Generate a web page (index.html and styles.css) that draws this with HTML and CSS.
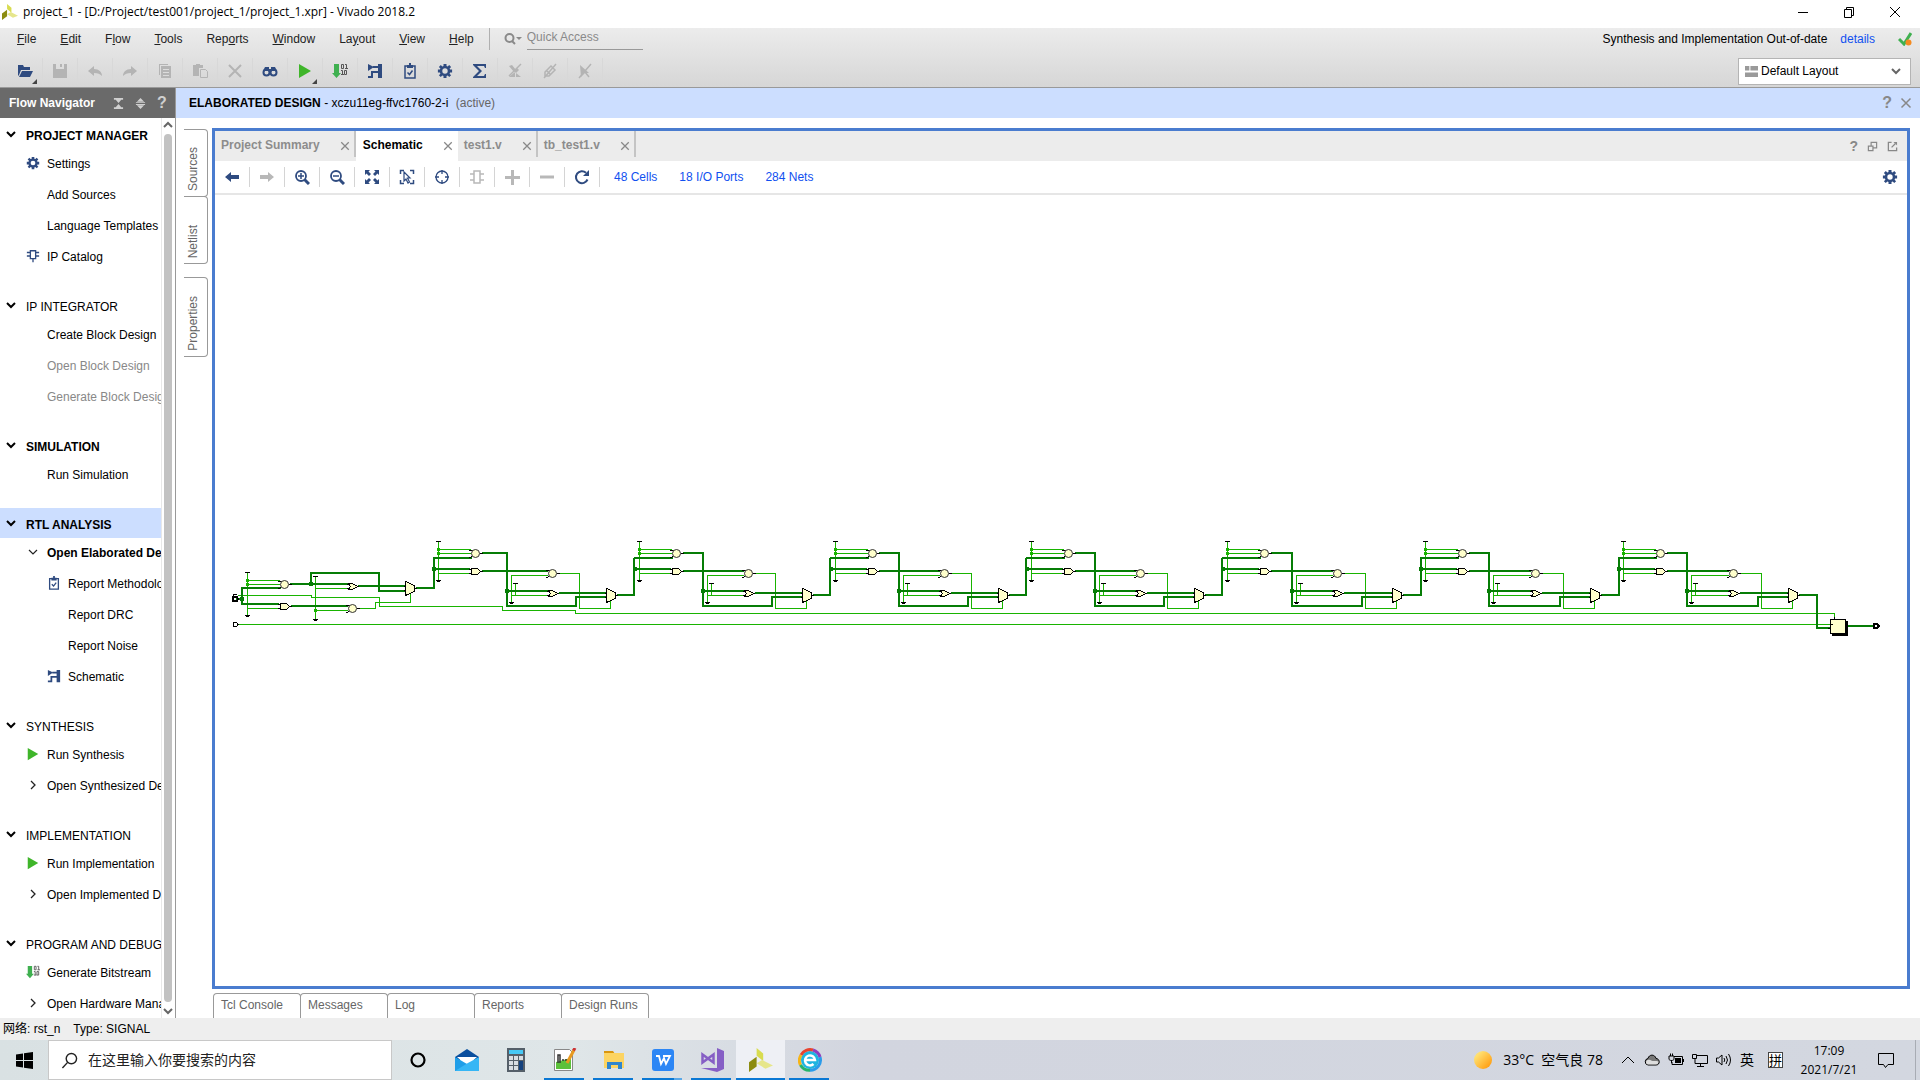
FILE: index.html
```html
<!DOCTYPE html>
<html lang="zh-CN">
<head>
    <meta charset="UTF-8">
    <meta name="viewport" content="width=device-width, initial-scale=1.0">
    <title>project_1 - [D:/Project/test001/project_1/project_1.xpr] - Vivado 2018.2</title>
    <link rel="stylesheet" href="styles.css">
</head>
<body>
    <!-- Shared icons -->
    <svg class="sprite" aria-hidden="true">
        <symbol id="i-logo" viewBox="0 0 22 22">
            <path fill="#d8dc50" d="M7 0l6 5v7l-6-5z"/>
            <path fill="#8c8c10" d="M7 8v9l-7 5v-9z"/>
            <path fill="#e6e68c" d="M7 14l5-3 10 5-7 3z"/>
        </symbol>
        <symbol id="i-gear" viewBox="0 0 16 16">
            <path fill="currentColor" fill-rule="evenodd" d="M6.5 1h3v2l1.2.5L12.200 2.100l1.900 1.900-1.500 1.500.5 1.100h2v3h-2l-.5 1.100 1.500 1.500-1.900 1.900-1.500-1.500-1.200.5v2h-3v-2l-1.200-.5-1.500 1.500-1.900-1.900 1.500-1.500L2.900 9.600h-2v-3h2l.5-1.100L1.900 4l1.900-1.900 1.500 1.400L6.500 3zM8 5.300a2.700 2.700 0 1 0 0 5.400 2.700 2.700 0 0 0 0-5.400z"/>
        </symbol>
        <symbol id="i-open" viewBox="0 0 16 16">
            <path fill="currentColor" d="M1 2h5l1 2h6v3H4l-2 5-1 1zM5 8h11l-3 6H2z"/>
        </symbol>
        <symbol id="i-save" viewBox="0 0 16 16">
            <path fill="currentColor" fill-rule="evenodd" d="M1 1h3v5h8V1h3v14H1zM8 1h2v3H8z"/>
        </symbol>
        <symbol id="i-undo" viewBox="0 0 16 16">
            <path fill="currentColor" d="M1 8l6-5v3c5 0 8 3 8 7-2-2-4-3-8-3v3z"/>
        </symbol>
        <symbol id="i-redo" viewBox="0 0 16 16">
            <path fill="currentColor" d="M15 8L9 3v3c-5 0-8 3-8 7 2-2 4-3 8-3v3z"/>
        </symbol>
        <symbol id="i-copy" viewBox="0 0 16 16">
            <path fill="currentColor" d="M2 1h9v1H3v10H2z"/>
            <path fill="currentColor" fill-rule="evenodd" d="M4 3h10v12H4zm2 3v1h6V6zm0 3v1h6V9zm0 3v1h6v-1z"/>
        </symbol>
        <symbol id="i-paste" viewBox="0 0 16 16">
            <path fill="currentColor" d="M1 2h3V1h4v1h3v3H7v8H1z"/>
            <path fill="none" stroke="currentColor" d="M8.500 6.500h5l2 2v6h-7z"/>
        </symbol>
        <symbol id="i-cross" viewBox="0 0 16 16">
            <path fill="none" stroke="currentColor" stroke-width="2" d="M2 2l12 12M14 2L2 14"/>
        </symbol>
        <symbol id="i-find" viewBox="0 0 16 16">
            <path fill="currentColor" d="M3 4h4v2h2V4h4l2 4H1z"/>
            <g fill="none" stroke="currentColor" stroke-width="2"><circle cx="4.500" cy="9.500" r="3"/><circle cx="11.500" cy="9.500" r="3"/></g>
            <path fill="currentColor" d="M7 6h2v4H7z"/>
        </symbol>
        <symbol id="i-play" viewBox="0 0 16 16">
            <path fill="#3fb52a" d="M2 1l12 7-12 7z"/>
        </symbol>
        <symbol id="i-bits" viewBox="0 0 16 16">
            <path fill="#3fb050" d="M2 1h5v9h2l-4.500 5L0 10h2z"/>
            <path fill="none" stroke="#555" d="M9.500 1.500h2v4h-2zM13 1.500h1.500v4M13 5.500h3M14.500 7.500v4h-2v-4zM9 7.500h1.500v4M9 11.500h3"/>
        </symbol>
        <symbol id="i-schem" viewBox="0 0 16 16">
            <path fill="currentColor" d="M1 1l6 3-6 4zM11 1h4v14h-4z"/>
            <path fill="none" stroke="currentColor" stroke-width="2" d="M6 4h6M5 14V9h7M1 14h5"/>
        </symbol>
        <symbol id="i-report" viewBox="0 0 16 16">
            <path fill="none" stroke="currentColor" stroke-width="1.500" d="M3 3h10v12H3zM5.500 9.500l2 2 3-4"/>
            <path fill="currentColor" d="M5 2h2V0h2v2h2v3H5z"/>
        </symbol>
        <symbol id="i-sigma" viewBox="0 0 16 16">
            <path fill="currentColor" d="M1 1h13v4h-1l-1-2H5l5 5-5 5h7l1-2h1v4H1v-1l6-6-6-6z"/>
        </symbol>
        <symbol id="i-nomark" viewBox="0 0 16 16">
            <path fill="currentColor" d="M2 3l3-1 4 5-2 2zM7 8l3-3 2 2-3 3zM8 9l-6 5h6zM9 10l5 4H9z"/>
            <path stroke="currentColor" stroke-width="1.500" d="M14 1L2 13"/>
        </symbol>
        <symbol id="i-nopen" viewBox="0 0 16 16">
            <path fill="none" stroke="currentColor" stroke-width="1.500" d="M3 9l6-6 4 4-6 6H3zM14 1L2 15M5 8l4 4"/>
        </symbol>
        <symbol id="i-nocursor" viewBox="0 0 16 16">
            <path fill="currentColor" d="M3 2l9 8H8l-4 4z"/>
            <path stroke="currentColor" stroke-width="1.500" d="M14 1L2 15M8 9l4 5"/>
        </symbol>
        <symbol id="i-chip" viewBox="0 0 16 16">
            <path fill="none" stroke="currentColor" stroke-width="1.500" d="M5 2h6v9H5zM1 4h4M1 8h4M11 4h4M11 8h4M8 11v4"/>
        </symbol>
        <symbol id="i-block" viewBox="0 0 16 16">
            <path fill="none" stroke="currentColor" stroke-width="1.500" d="M5 2h6v12H5zM1 5h4M1 11h4M11 5h4M11 11h4"/>
        </symbol>
        <symbol id="i-back" viewBox="0 0 16 16">
            <path fill="currentColor" d="M1 8l6-5v3h8v4H7v3z"/>
        </symbol>
        <symbol id="i-forward" viewBox="0 0 16 16">
            <path fill="currentColor" d="M15 8L9 3v3H1v4h8v3z"/>
        </symbol>
        <symbol id="i-zoomin" viewBox="0 0 16 16">
            <g fill="none" stroke="currentColor"><circle cx="7" cy="7" r="5" stroke-width="1.800"/><path stroke-width="1.500" d="M7 4v6M4 7h6"/><path stroke-width="3" d="M10.500 10.500L15 15"/></g>
        </symbol>
        <symbol id="i-zoomout" viewBox="0 0 16 16">
            <g fill="none" stroke="currentColor"><circle cx="7" cy="7" r="5" stroke-width="1.800"/><path stroke-width="1.500" d="M4 7h6"/><path stroke-width="3" d="M10.500 10.500L15 15"/></g>
        </symbol>
        <symbol id="i-fit" viewBox="0 0 16 16">
            <path fill="currentColor" d="M1 1h5L4.500 2.500 7 5 5 7 2.500 4.500 1 6zM15 1v5l-1.500-1.500L11 7 9 5l2.500-2.500L10 1zM1 15v-5l1.500 1.500L5 9l2 2-2.500 2.500L6 15zM15 15h-5l1.500-1.500L9 11l2-2 2.500 2.500L15 10z"/>
        </symbol>
        <symbol id="i-select" viewBox="0 0 16 16">
            <path fill="none" stroke="currentColor" stroke-width="1.500" d="M1.500 5V1.500H5M11 1.500h3.500V5M14.500 11v3.500H11M5 14.500H1.500V11"/>
            <path fill="none" stroke="currentColor" stroke-width="1.200" d="M5 3l6 6H8.500l2 4-1.500 1-2-4-2 2z"/>
        </symbol>
        <symbol id="i-target" viewBox="0 0 16 16">
            <g fill="none" stroke="currentColor" stroke-width="1.300"><circle cx="8" cy="8" r="6"/><path d="M8 1v4M8 11v4M1 8h4M11 8h4"/></g>
        </symbol>
        <symbol id="i-plus" viewBox="0 0 16 16">
            <path fill="currentColor" d="M7 1h3v6h6v3h-6v6H7v-6H1V7h6z"/>
        </symbol>
        <symbol id="i-minus" viewBox="0 0 16 16">
            <path fill="currentColor" d="M1 6.500h14v3H1z"/>
        </symbol>
        <symbol id="i-refresh" viewBox="0 0 16 16">
            <path fill="none" stroke="currentColor" stroke-width="2" d="M13.500 10.500A6 6 0 1 1 12 3.700"/>
            <path fill="currentColor" d="M15 1v6H9z"/>
        </symbol>
        <symbol id="i-chev" viewBox="0 0 10 10">
            <path fill="none" stroke="currentColor" stroke-width="2" d="M1 3l4 4 4-4"/>
        </symbol>
        <symbol id="i-chevthin" viewBox="0 0 10 10">
            <path fill="none" stroke="currentColor" stroke-width="1.200" d="M1 3l4 4 4-4"/>
        </symbol>
        <symbol id="i-chevright" viewBox="0 0 10 10">
            <path fill="none" stroke="currentColor" stroke-width="1.300" d="M3 1l4 4-4 4"/>
        </symbol>
        <symbol id="i-float" viewBox="0 0 12 12">
            <path fill="none" stroke="currentColor" stroke-width="1.300" d="M1.500 5.500h5v5h-5zM4.500 5V1.500h6v6H7"/>
        </symbol>
        <symbol id="i-popout" viewBox="0 0 12 12">
            <path fill="none" stroke="currentColor" stroke-width="1.400" d="M5 1.500H1.500v9h9V7M5 7l4-4"/>
            <path fill="currentColor" d="M7 1h4v4z"/>
        </symbol>
    </svg>

    <header class="titlebar">
        <svg class="title-logo"><use href="#i-logo"/></svg>
        <h1>project_1 - [D:/Project/test001/project_1/project_1.xpr] - Vivado 2018.2</h1>
        <button class="win-btn" aria-label="Minimize"><svg viewBox="0 0 12 12"><path d="M1 6.500h10"/></svg></button>
        <button class="win-btn" aria-label="Restore"><svg viewBox="0 0 12 12"><path d="M1.500 3.500h7v8h-7zM3.500 3V1.500h7v8H9"/></svg></button>
        <button class="win-btn" aria-label="Close"><svg viewBox="0 0 12 12"><path d="M1 1l10 10M11 1L1 11"/></svg></button>
    </header>

    <div class="chrome">
        <nav class="menubar">
            <button><u>F</u>ile</button>
            <button><u>E</u>dit</button>
            <button>F<u>l</u>ow</button>
            <button><u>T</u>ools</button>
            <button>Rep<u>o</u>rts</button>
            <button><u>W</u>indow</button>
            <button>La<u>y</u>out</button>
            <button><u>V</u>iew</button>
            <button><u>H</u>elp</button>
            <label class="quick">
                <svg viewBox="0 0 18 14"><circle cx="5.500" cy="6" r="4"/><path d="M8 9l3 3"/><path class="solid" d="M12 5h6l-3 3z"/></svg>
                <input type="text" placeholder="Quick Access" aria-label="Quick Access">
            </label>
            <div class="run-state">
                <span>Synthesis and Implementation Out-of-date</span>
                <a href="#">details</a>
                <svg viewBox="0 0 14 14"><path d="M1 7l5 5 7-11" fill="none" stroke="#3fb050" stroke-width="3"/><circle cx="10.500" cy="10.500" r="3" fill="#f58a1f"/></svg>
            </div>
        </nav>
        <div class="toolbar">
            <button class="drop" aria-label="Open"><svg><use href="#i-open"/></svg></button>
            <button disabled aria-label="Save"><svg><use href="#i-save"/></svg></button>
            <button disabled aria-label="Undo"><svg><use href="#i-undo"/></svg></button>
            <button disabled aria-label="Redo"><svg><use href="#i-redo"/></svg></button>
            <button disabled aria-label="Copy"><svg><use href="#i-copy"/></svg></button>
            <button disabled aria-label="Paste"><svg><use href="#i-paste"/></svg></button>
            <button disabled aria-label="Delete"><svg><use href="#i-cross"/></svg></button>
            <button aria-label="Find"><svg><use href="#i-find"/></svg></button>
            <button class="drop" aria-label="Run"><svg><use href="#i-play"/></svg></button>
            <button aria-label="Generate Bitstream"><svg><use href="#i-bits"/></svg></button>
            <button aria-label="Schematic"><svg><use href="#i-schem"/></svg></button>
            <button aria-label="Report Methodology"><svg><use href="#i-report"/></svg></button>
            <button aria-label="Settings"><svg><use href="#i-gear"/></svg></button>
            <button aria-label="Report"><svg><use href="#i-sigma"/></svg></button>
            <button disabled aria-label="Unmark"><svg><use href="#i-nomark"/></svg></button>
            <button disabled aria-label="Unhighlight"><svg><use href="#i-nopen"/></svg></button>
            <button disabled aria-label="Unselect"><svg><use href="#i-nocursor"/></svg></button>
            <div class="layout-pick">
                <svg viewBox="0 0 12 12"><path fill="#9a9a9a" d="M0 1h4v4H0zM5 1h7v4H5zM0 7h12v4H0z"/></svg>
                <select aria-label="Layout"><option>Default Layout</option></select>
                <svg class="arrow"><use href="#i-chev"/></svg>
            </div>
        </div>
    </div>

    <div class="workspace">
        <aside class="navigator">
            <div class="nav-head">
                <h2>Flow Navigator</h2>
                <button aria-label="Collapse All"><svg viewBox="0 0 12 12"><path d="M1 0h10v2H1zM1 10h10v2H1zM3 2h6L6 5.500zM3 10h6L6 6.500z"/></svg></button>
                <button aria-label="Expand All"><svg viewBox="0 0 12 12"><path d="M6 0l4 4H2zM6 12l4-4H2zM1 4.500h10v1H1zM1 6.500h10v1H1z"/></svg></button>
                <button class="help" aria-label="Help">?</button>
            </div>
            <div class="nav-body">
                <div class="nav-tree">
                    <section>
                        <h3><svg><use href="#i-chev"/></svg><span>PROJECT MANAGER</span></h3>
                        <ul>
                            <li><svg><use href="#i-gear"/></svg><a href="#">Settings</a></li>
                            <li><a href="#">Add Sources</a></li>
                            <li><a href="#">Language Templates</a></li>
                            <li><svg><use href="#i-chip"/></svg><a href="#">IP Catalog</a></li>
                        </ul>
                    </section>
                    <section>
                        <h3 class="plain"><svg><use href="#i-chev"/></svg><span>IP INTEGRATOR</span></h3>
                        <ul>
                            <li><a href="#">Create Block Design</a></li>
                            <li class="off"><a>Open Block Design</a></li>
                            <li class="off"><a>Generate Block Design</a></li>
                        </ul>
                    </section>
                    <section>
                        <h3><svg><use href="#i-chev"/></svg><span>SIMULATION</span></h3>
                        <ul>
                            <li><a href="#">Run Simulation</a></li>
                        </ul>
                    </section>
                    <section>
                        <h3 class="current"><svg><use href="#i-chev"/></svg><span>RTL ANALYSIS</span></h3>
                        <ul>
                            <li class="open"><svg class="twist"><use href="#i-chevthin"/></svg><a href="#">Open Elaborated Design</a></li>
                            <li class="deep"><svg><use href="#i-report"/></svg><a href="#">Report Methodology</a></li>
                            <li class="deep"><a href="#">Report DRC</a></li>
                            <li class="deep"><a href="#">Report Noise</a></li>
                            <li class="deep"><svg><use href="#i-schem"/></svg><a href="#">Schematic</a></li>
                        </ul>
                    </section>
                    <section>
                        <h3 class="plain"><svg><use href="#i-chev"/></svg><span>SYNTHESIS</span></h3>
                        <ul>
                            <li><svg><use href="#i-play"/></svg><a href="#">Run Synthesis</a></li>
                            <li><svg class="twist"><use href="#i-chevright"/></svg><a href="#">Open Synthesized Design</a></li>
                        </ul>
                    </section>
                    <section>
                        <h3 class="plain"><svg><use href="#i-chev"/></svg><span>IMPLEMENTATION</span></h3>
                        <ul>
                            <li><svg><use href="#i-play"/></svg><a href="#">Run Implementation</a></li>
                            <li><svg class="twist"><use href="#i-chevright"/></svg><a href="#">Open Implemented Design</a></li>
                        </ul>
                    </section>
                    <section>
                        <h3 class="plain"><svg><use href="#i-chev"/></svg><span>PROGRAM AND DEBUG</span></h3>
                        <ul>
                            <li><svg><use href="#i-bits"/></svg><a href="#">Generate Bitstream</a></li>
                            <li><svg class="twist"><use href="#i-chevright"/></svg><a href="#">Open Hardware Manager</a></li>
                        </ul>
                    </section>
                </div>
                <div class="scrollbar">
                    <svg viewBox="0 0 10 10"><path d="M1 7l4-4 4 4"/></svg>
                    <div class="thumb"></div>
                    <svg viewBox="0 0 10 10"><path d="M1 3l4 4 4-4"/></svg>
                </div>
            </div>
        </aside>

        <main class="design">
            <div class="design-head">
                <h2><b>ELABORATED DESIGN</b> - xczu11eg-ffvc1760-2-i <span>(active)</span></h2>
                <button class="help" aria-label="Help">?</button>
                <button aria-label="Close"><svg><use href="#i-cross"/></svg></button>
            </div>
            <div class="design-body">
                <div class="side-tabs">
                    <button><span>Sources</span></button>
                    <button><span>Netlist</span></button>
                    <button class="apart"><span>Properties</span></button>
                </div>
                <div class="center">
                    <div class="panel">
                        <div class="tabs">
                            <div class="tab"><button>Project Summary</button><button class="x" aria-label="Close Project Summary"><svg><use href="#i-cross"/></svg></button></div>
                            <div class="tab active"><button>Schematic</button><button class="x" aria-label="Close Schematic"><svg><use href="#i-cross"/></svg></button></div>
                            <div class="tab"><button>test1.v</button><button class="x" aria-label="Close test1.v"><svg><use href="#i-cross"/></svg></button></div>
                            <div class="tab"><button>tb_test1.v</button><button class="x" aria-label="Close tb_test1.v"><svg><use href="#i-cross"/></svg></button></div>
                            <div class="tab-tools">
                                <button class="help" aria-label="Help">?</button>
                                <button aria-label="Float"><svg><use href="#i-float"/></svg></button>
                                <button aria-label="Pop out"><svg><use href="#i-popout"/></svg></button>
                            </div>
                        </div>
                        <div class="view-tools">
                            <button aria-label="Back"><svg><use href="#i-back"/></svg></button>
                            <button disabled aria-label="Forward"><svg><use href="#i-forward"/></svg></button>
                            <button aria-label="Zoom In"><svg><use href="#i-zoomin"/></svg></button>
                            <button aria-label="Zoom Out"><svg><use href="#i-zoomout"/></svg></button>
                            <button aria-label="Zoom Fit"><svg><use href="#i-fit"/></svg></button>
                            <button aria-label="Select Area"><svg><use href="#i-select"/></svg></button>
                            <button aria-label="Autofit"><svg><use href="#i-target"/></svg></button>
                            <button disabled aria-label="Expand Cell"><svg><use href="#i-block"/></svg></button>
                            <button disabled aria-label="Add"><svg><use href="#i-plus"/></svg></button>
                            <button disabled aria-label="Remove"><svg><use href="#i-minus"/></svg></button>
                            <button aria-label="Regenerate"><svg><use href="#i-refresh"/></svg></button>
                            <a href="#">48 Cells</a>
                            <a href="#">18 I/O Ports</a>
                            <a href="#">284 Nets</a>
                            <button class="view-gear" aria-label="Settings"><svg><use href="#i-gear"/></svg></button>
                        </div>
                        <div class="canvas">
                            <svg id="schematic" viewBox="215 195 1692 791" role="img" aria-label="Schematic"></svg>
                        </div>
                    </div>
                    <div class="bottom-tabs">
                        <button>Tcl Console</button>
                        <button>Messages</button>
                        <button>Log</button>
                        <button>Reports</button>
                        <button>Design Runs</button>
                    </div>
                </div>
            </div>
        </main>
    </div>

    <div class="statusbar"><span>网络: rst_n</span><span>Type: SIGNAL</span></div>

    <footer class="taskbar">
        <button class="start" aria-label="Start"><svg viewBox="0 0 17 17"><path d="M0 2.500L7 1.500V8H0zM8 1.300L17 0v8H8zM0 9h7v6.500l-7-1zM8 9h9v8l-9-1.300z"/></svg></button>
        <label class="search">
            <svg viewBox="0 0 18 18"><circle cx="11" cy="7" r="5.500"/><path d="M7 11l-5.500 6"/></svg>
            <input type="text" placeholder="在这里输入你要搜索的内容" aria-label="搜索">
        </label>
        <div class="apps">
            <button aria-label="Cortana"><svg viewBox="0 0 24 24"><circle cx="12" cy="12" r="6.500" fill="none" stroke="#000" stroke-width="2.200"/></svg></button>
            <button aria-label="Mail"><svg viewBox="0 0 24 24"><path fill="#0a4f9e" d="M0 9l12-8 12 8v3H0z"/><path fill="#fff" d="M2 9h20l-10 9z"/><path fill="#1f9ee8" d="M0 9l24 14H0z"/><path fill="#36b6f5" d="M24 9v14L0 23l12-7.500z"/></svg></button>
            <button aria-label="Calculator"><svg viewBox="0 0 24 24"><path fill="#555f69" d="M3 0h18v24H3z"/><path fill="#46c8f5" d="M5 2h14v4H5z"/><path fill="#d8dde2" d="M5 8h4v4H5zM10 8h4v4h-4zM15 8h4v4h-4zM5 13h4v4H5zM10 13h4v4h-4zM5 18h4v4H5zM10 18h4v4h-4z"/><path fill="#14427e" d="M15 13h4v9h-4z"/></svg></button>
            <button class="on" aria-label="Notepad++"><svg viewBox="0 0 24 24"><path fill="#fff" stroke="#888" d="M1.500 1.500h15l3 3v18h-18z"/><path fill="#5cc13a" d="M3 14l15-4v11H3z"/><path fill="none" stroke="#333" stroke-width="1.500" d="M5 15V7h2v8M9 12h2M12 12h2"/><path stroke="#e89a20" stroke-width="3" d="M21 2l-7 13"/><path stroke="#c33" stroke-width="3" d="M22 0l-1.500 2.500"/></svg></button>
            <button class="on" aria-label="Explorer"><svg viewBox="0 0 24 24"><path fill="#d9960f" d="M2 3h9l2 3H2z"/><path fill="#fcd462" d="M2 5h20v15H2z"/><path fill="#2f86cf" d="M5 14h15v7h-4v-4H9v4H5z"/></svg></button>
            <button class="on split" aria-label="WPS"><svg viewBox="0 0 24 24"><rect x="1" y="1" width="22" height="22" rx="3" fill="#2c86f5"/><path fill="none" stroke="#fff" stroke-width="1.800" d="M5 8h3l2 8 3-6 2 6 4-8h-7"/></svg></button>
            <button class="on" aria-label="Visual Studio"><svg viewBox="0 0 24 24"><path fill="#865fc5" d="M17 0l7 3v18l-7 3-16-4h16z"/><path fill="none" stroke="#865fc5" stroke-width="2.500" d="M2.500 6.500v8l11-8v8z"/></svg></button>
            <button class="on active" aria-label="Vivado"><svg><use href="#i-logo"/></svg></button>
            <button class="on" aria-label="Browser"><svg viewBox="0 0 24 24"><circle cx="12" cy="12" r="9" fill="#1fb5e0"/><g fill="none" stroke-width="3"><path stroke="#e8432e" d="M3 7A10.300 10.300 0 0 1 15 2"/><path stroke="#f7b416" d="M2.500 17A10.300 10.300 0 0 1 3 7"/><path stroke="#25b56a" d="M12 22.300A10.300 10.300 0 0 1 2.500 17"/><path stroke="#2a9bea" d="M22 9A10.300 10.300 0 0 1 12 22.300"/><path stroke="#8b3fc0" d="M15 2a10.300 10.300 0 0 1 7 7"/></g><path fill="none" stroke="#fff" stroke-width="2.500" d="M7 12h10a5 5 0 1 0-1.500 4"/></svg></button>
        </div>
        <div class="tray">
            <svg class="sun" viewBox="0 0 18 18"><defs><linearGradient id="sun" x1="0" y1="0" x2="1" y2="1"><stop offset="0.200" stop-color="#ffe070"/><stop offset="1" stop-color="#ff9100"/></linearGradient></defs><circle cx="9" cy="9" r="9" fill="url(#sun)"/></svg>
            <span class="weather">33°C&nbsp; 空气良 78</span>
            <svg class="tray-icon" viewBox="0 0 16 16"><path d="M2 11l6-6 6 6"/></svg>
            <svg class="tray-icon" viewBox="0 0 16 16"><path fill="#777" d="M4 13a3.300 3.300 0 0 1 0-6.500C5 2 11 2 12 6.500c4 0 4.500 6.500 0 6.500z"/><path fill="#ddd" stroke="none" d="M4 12.500c-2 0-3-3-.5-4.500 3-1 4 1 5 1s5-.5 6 .5c0 2-1 3-2.500 3z"/></svg>
            <svg class="tray-icon" viewBox="0 0 16 16"><path d="M6 4.500h8.500v8H4V10M15.500 7v3M1 4h5v3c0 2-5 2-5 0zM2.500 4V1.500M4.500 4V1.500M3.500 8v3"/><path fill="#000" stroke="none" d="M7 6h6v5H7z"/></svg>
            <svg class="tray-icon" viewBox="0 0 16 16"><path d="M5 3.500h10.500v8H3V7M.5 2.500h4v4h-4zM8.500 12v3M5 14.500h7"/></svg>
            <svg class="tray-icon" viewBox="0 0 16 16"><path d="M.5 6h2L6 3v10L2.500 10h-2zM8 6q1.500 2 0 4M10 4q3 4 0 8M12.500 2q4 6 0 12"/></svg>
            <span class="ime">英</span>
            <span class="ime boxed">拼</span>
            <time class="clock"><span>17:09</span><span>2021/7/21</span></time>
            <svg class="notice" viewBox="0 0 18 18"><path d="M1.500 2.500h15v11H11l-2.500 3-2-3h-5z"/></svg>
        </div>
    </footer>

    <script>
        const svg = document.getElementById('schematic');

        function add(tag, cls, attrs) {
            const el = document.createElementNS('http://www.w3.org/2000/svg', tag);
            el.setAttribute('class', cls);
            for (const k in attrs) el.setAttribute(k, attrs[k]);
            svg.appendChild(el);
        }

        const net = (d) => add('path', 'net', { d });
        const bus = (d) => add('path', 'bus', { d });
        const pin = (d) => add('path', 'pin', { d });
        const gate = (d) => add('path', 'gate', { d });

        function dot(x, y, size, cls) {
            add('rect', cls, { x: x - size / 2, y: y - size / 2, width: size, height: size });
        }

        // constant source: bar at the top
        function vcc(x, y) {
            pin(`M${x - 2.5} ${y}h5`);
        }

        // ground: small arrow at the bottom
        function gnd(x, y) {
            add('path', 'solid', { d: `M${x - 2.5} ${y - 1}h5l-1.500 2h-2z` });
        }

        function compare(x, y) {
            pin(`M${x - 6} ${y - 3.5}l3 1M${x - 6} ${y + 4}l3 -1M${x + 4} ${y}h3`);
            add('circle', 'round', { cx: x, cy: y, r: 4 });
        }

        function andGate(x, y) {
            pin(`M${x - 7} ${y - 2}h2M${x - 7} ${y + 2}h2M${x + 5} ${y}h2`);
            gate(`M${x - 4} ${y - 3}h6l3 3l-3 3h-6z`);
        }

        function orGate(x, y) {
            pin(`M${x - 6} ${y - 2}h4M${x - 6} ${y + 2}h4M${x + 4} ${y}h2`);
            gate(`M${x - 4} ${y - 3}h4l5 3l-5 3h-4l2 -3z`);
        }

        function mux(x, y) {
            pin(`M${x - 2} ${y - 2}h2M${x - 2} ${y + 2}h2M${x + 9} ${y}h2`);
            gate(`M${x} ${y - 7}l9 4v6l-9 4z`);
        }

        // input stage
        net('M247.5 573V615M247.5 580.5H280M247.5 584.5H280M247.5 608.5H279');
        net('M315.5 577V619M315.5 588.5H348M315.5 610.5H348');
        net('M357 608.5H375.5V602.5H410.5V594');
        net('M238 595.5H311.5V597.5H379.5V606.5H502.5V610.5H575.5V613.5H1834.5V619');
        net('M238 624.5H1830');
        bus('M236 599H242M281 588H242V604H279M290 584H348M311 584V573H379V591H405');
        bus('M358 586H405M291 606H348M416 588H434V558');
        dot(247.5, 580.5, 3, 'net-dot');
        dot(247.5, 584.5, 3, 'net-dot');
        dot(315.5, 610.5, 3, 'net-dot');
        dot(242, 599, 4, 'bus-dot');
        dot(311, 584, 4, 'bus-dot');
        vcc(247.5, 572.5);
        gnd(247.5, 616);
        vcc(315.5, 576.5);
        gnd(315.5, 620);
        compare(284.5, 584.5);
        andGate(284.5, 606.5);
        orGate(352.5, 586.5);
        compare(352.5, 608.5);
        mux(405.5, 588.5);
        pin('M236.5 594.5h-3v3M236.5 626.500h-3v-4h3l1.500 2z');
        add('path', 'port', { d: 'M233 597h4l1 2l-1 2h-4z' });

        // seven identical stages: x of the source column, offsets of bus, gates and mux
        const stages = [
            { x: 438.5, bus: 68.5, cell: 114, mux: 168, end: 634 },
            { x: 639.5, bus: 63.5, cell: 109, mux: 163, end: 830 },
            { x: 835.5, bus: 63.5, cell: 109, mux: 163, end: 1026 },
            { x: 1031.5, bus: 63.5, cell: 109, mux: 163, end: 1222 },
            { x: 1227.5, bus: 64.5, cell: 110, mux: 165, end: 1421 },
            { x: 1425.5, bus: 63.5, cell: 110, mux: 165, end: 1619 },
            { x: 1623.5, bus: 63.5, cell: 110, mux: 165, end: 1817 }
        ];

        stages.forEach((s, i) => {
            const x = s.x, b = x + s.bus, c = x + s.cell, m = x + s.mux;
            const last = i === stages.length - 1;
            net(`M${x} 542V581M${x} 549.5H${x + 32}M${x} 553.5H${x + 32}M${x} 573.5H${x + 31}`);
            net(`M${c - 5} 575.5H${b + 4.5}V602M${b + 4.5} 595.5H${c - 5}M${b + 8.5} 584V595`);
            net(`M${c + 5} 573.5H${m - 27}V608.5H${m + 4}V601`);
            bus(`M${x - 5.5} 558H${x + 33}M${x - 4.5} 569H${x + 31}M${x + 43} 553H${b}V606H${m - 31}V597H${m}`);
            bus(`M${x + 43} 571H${c - 5}M${b} 591H${c - 5}M${c + 6} 593H${m}`);
            bus(`M${m + 10} 595H${s.end}V${last ? 628 : 558}` + (last ? 'H1830' : ''));
            dot(x, 549.5, 3, 'net-dot');
            dot(x, 553.5, 3, 'net-dot');
            dot(x - 4.5, 569, 4, 'bus-dot');
            dot(b, 591, 4, 'bus-dot');
            vcc(x, 541.5);
            gnd(x, 581);
            vcc(b + 8.5, 583.5);
            gnd(b + 4.5, 603);
            compare(x + 37, 553.5);
            andGate(x + 37, 571.5);
            compare(c, 573.5);
            orGate(c, 593.5);
            mux(m, 595.5);
        });

        // output register
        add('rect', 'solid', { x: 1832, y: 621, width: 16, height: 15 });
        add('rect', 'gate', { x: 1830.5, y: 619.5, width: 15, height: 14 });
        bus('M1848 626H1874');
        pin('M1828 628h2M1830 624.500h3M1834.500 617v2');
        add('path', 'port', { d: 'M1874 624h3l2 2l-2 2h-3z' });
    </script>
</body>
</html>
```
FILE: styles.css
```css
* {
    margin: 0;
    padding: 0;
    box-sizing: border-box;
}

body {
    font-family: "Liberation Sans", Arial, "Noto Sans CJK SC", sans-serif;
    font-size: 12px;
    line-height: 16px;
    color: #000;
    background: #fff;
    height: 100vh;
    display: flex;
    flex-direction: column;
    overflow: hidden;
}

button {
    font: inherit;
    color: inherit;
    background: none;
    border: none;
    cursor: pointer;
}

input,
select {
    font: inherit;
    border: none;
    outline: none;
    background: none;
}

a {
    color: #1050f0;
    text-decoration: none;
}

ul {
    list-style: none;
}

h1,
h2,
h3 {
    font-size: 12px;
    font-weight: normal;
}

svg {
    display: block;
    flex: none;
}

.sprite {
    display: none;
}

.help {
    font-size: 16px;
    font-weight: bold;
}

/* Title bar */
.titlebar {
    height: 28px;
    flex: none;
    display: flex;
    align-items: center;
    padding: 0 2px;
    padding-bottom: 4px;
}

.title-logo {
    width: 16px;
    height: 16px;
}

.titlebar h1 {
    flex: 1;
    margin-left: 5px;
    font-family: "Open Sans", "Noto Sans", sans-serif;
    font-size: 12px;
}

.win-btn {
    width: 46px;
    display: flex;
    justify-content: center;
}

.win-btn svg {
    width: 12px;
    height: 12px;
    fill: none;
    stroke: #000;
}

/* Menu and main toolbar */
.chrome {
    flex: none;
    background: linear-gradient(#ececec, #d6d6d6);
    border-bottom: 1px solid #999;
}

.menubar {
    height: 27px;
    display: flex;
    align-items: center;
    padding: 0 8px 5px 5px;
    color: #222;
}

.menubar > button {
    padding: 0 12px;
}

.quick {
    display: flex;
    align-items: center;
    gap: 5px;
    height: 22px;
    width: 154px;
    margin-left: 3px;
    padding-left: 14px;
    border-left: 1px solid #b0b0b0;
}

.quick svg {
    width: 18px;
    height: 14px;
    fill: none;
    stroke: #8a8a8a;
    stroke-width: 2;
}

.quick .solid {
    fill: #8a8a8a;
    stroke: none;
}

.quick input {
    width: 116px;
    height: 22px;
    padding-bottom: 3px;
    border-bottom: 1px solid #999;
}

.quick input::placeholder {
    color: #8a8a8a;
}

.run-state {
    margin-left: auto;
    display: flex;
    align-items: center;
    gap: 13px;
    color: #000;
}

.run-state svg {
    width: 14px;
    height: 14px;
    margin-left: 10px;
}

.toolbar {
    height: 32px;
    display: flex;
    align-items: center;
    padding: 0 9px 0 8px;
    color: #2f4b80;
}

.toolbar button {
    width: 35px;
    height: 26px;
    display: flex;
    align-items: center;
    justify-content: center;
    border-right: 1px solid #d8d8d8;
    position: relative;
}

.toolbar button svg,
.view-tools button svg {
    width: 16px;
    height: 16px;
}

.toolbar button:disabled {
    color: #b4b4b4;
}

.toolbar .drop::after {
    content: "";
    position: absolute;
    right: 5px;
    bottom: 0;
    border-left: 5px solid transparent;
    border-bottom: 5px solid #444;
}

.layout-pick {
    width: 173px;
    height: 27px;
    margin-left: auto;
    display: flex;
    align-items: center;
    gap: 3px;
    padding: 0 9px 0 6px;
    background: #fff;
    border: 1px solid #b4b4b4;
    color: #666;
}

.layout-pick svg {
    width: 13px;
    height: 13px;
}

.layout-pick .arrow {
    width: 10px;
    height: 10px;
}

.layout-pick select {
    flex: 1;
    appearance: none;
    color: #000;
}

/* Flow navigator */
.workspace {
    flex: 1;
    min-height: 0;
    display: flex;
}

.navigator {
    width: 176px;
    flex: none;
    display: flex;
    flex-direction: column;
    border-right: 1px solid #999;
}

.nav-head {
    height: 30px;
    flex: none;
    display: flex;
    align-items: center;
    padding: 0 2px 0 9px;
    background: #6a6a6a;
    color: #fff;
}

.nav-head h2 {
    flex: 1;
    font-weight: bold;
}

.nav-head button {
    width: 22px;
    display: flex;
    justify-content: center;
    color: #d0d0d0;
}

.nav-head svg {
    width: 11px;
    height: 11px;
    fill: #d0d0d0;
}

.nav-body {
    flex: 1;
    min-height: 0;
    display: flex;
}

.nav-tree {
    flex: 1;
    min-width: 0;
    overflow: hidden;
    padding-top: 1px;
}

.nav-tree section {
    margin-bottom: 17px;
}

.nav-tree h3 {
    height: 30px;
    display: flex;
    align-items: center;
    gap: 10px;
    padding-left: 6px;
    font-weight: bold;
    white-space: nowrap;
}

.nav-tree h3.plain {
    font-weight: normal;
}

.nav-tree h3.current {
    background: #ccdeff;
}

.nav-tree h3 svg {
    width: 10px;
    height: 10px;
}

.nav-tree h3 span,
.nav-tree li a {
    padding-top: 3px;
}

.nav-tree li {
    height: 31px;
    display: flex;
    align-items: center;
    padding: 0 0 4px 26px;
    white-space: nowrap;
    color: #2f4b80;
}

.nav-tree li.deep {
    padding-left: 47px;
}

.nav-tree li svg {
    width: 14px;
    height: 14px;
    margin-right: 7px;
}

.nav-tree li .twist {
    height: 10px;
    color: #222;
}

.nav-tree li a {
    color: #000;
}

.nav-tree li a:first-child {
    margin-left: 21px;
}

.nav-tree li.open a {
    font-weight: bold;
}

.nav-tree li.off a {
    color: #888;
}

.scrollbar {
    width: 14px;
    display: flex;
    flex-direction: column;
    align-items: center;
    gap: 4px;
    padding: 2px 1px 2px 0;
    border-left: 1px solid #e8e8e8;
}

.scrollbar svg {
    width: 10px;
    height: 10px;
    fill: none;
    stroke: #666;
    stroke-width: 2;
}

.thumb {
    flex: 1;
    width: 8px;
    border-radius: 4px;
    background: #c2c2c2;
}

/* Elaborated design */
.design {
    flex: 1;
    min-width: 0;
    display: flex;
    flex-direction: column;
}

.design-head {
    height: 30px;
    flex: none;
    display: flex;
    align-items: center;
    gap: 8px;
    padding: 0 8px 0 13px;
    background: #ccdeff;
}

.design-head h2 {
    flex: 1;
}

.design-head h2 span {
    margin-left: 4px;
    color: #666;
}

.design-head button {
    color: #888;
}

.design-head svg {
    width: 12px;
    height: 12px;
}

.design-body {
    flex: 1;
    min-height: 0;
    display: flex;
    padding: 10px 10px 0 8px;
}

.side-tabs {
    width: 24px;
    margin-right: 4px;
    padding-top: 1px;
}

.side-tabs button {
    width: 24px;
    height: 68px;
    display: flex;
    align-items: flex-end;
    padding: 0 0 5px 1px;
    color: #666;
    border: 1px solid #999;
    border-left: none;
    border-radius: 0 4px 4px 0;
}

.side-tabs button + button {
    margin-top: -1px;
}

.side-tabs button.apart {
    height: 80px;
    margin-top: 13px;
}

.side-tabs span {
    writing-mode: vertical-rl;
    transform: rotate(180deg);
}

.center {
    flex: 1;
    min-width: 0;
    display: flex;
    flex-direction: column;
}

.panel {
    flex: 1;
    min-height: 0;
    display: flex;
    flex-direction: column;
    border: 3px solid #4a7ccf;
}

.tabs {
    height: 30px;
    flex: none;
    display: flex;
    align-items: flex-start;
    background: #ececec;
}

.tab {
    height: 26px;
    display: flex;
    align-items: center;
    padding: 1px 4px 0 6px;
    color: #8c8c8c;
    font-weight: bold;
    border-right: 2px solid #c4c4c4;
}

.tab.active {
    height: 30px;
    padding: 1px 5px 4px 7px;
    background: #fff;
    color: #000;
    border-right: none;
}

.tab .x {
    margin-left: 20px;
    padding-top: 3px;
    color: #888;
}

.tab svg {
    width: 10px;
    height: 10px;
}

.tab-tools {
    margin-left: auto;
    height: 30px;
    display: flex;
    align-items: center;
    gap: 9px;
    padding-right: 9px;
    color: #888;
}

.tab-tools .help {
    font-size: 14px;
}

.tab-tools svg {
    width: 11px;
    height: 11px;
}

.view-tools {
    height: 34px;
    flex: none;
    display: flex;
    align-items: center;
    border-bottom: 2px solid #e6e6e6;
    color: #2f4b80;
}

.view-tools button {
    width: 35px;
    height: 20px;
    display: flex;
    align-items: center;
    justify-content: center;
    border-right: 1px solid #d4d4d4;
}

.view-tools button:disabled {
    color: #b8b8b8;
}

.view-tools a {
    margin-left: 14px;
    margin-right: 8px;
}

.view-tools .view-gear {
    margin-left: auto;
    border-right: none;
}

.canvas {
    flex: 1;
    min-height: 0;
}

.canvas svg {
    width: 100%;
    height: 100%;
    fill: none;
    shape-rendering: crispEdges;
}

.net {
    stroke: #18b400;
}

.bus {
    stroke: #067d06;
    stroke-width: 2;
}

.pin {
    stroke: #000;
}

.gate {
    fill: #ffffcc;
    stroke: #000;
}

.round {
    fill: #ffffcc;
    stroke: #333;
    shape-rendering: auto;
}

.port {
    stroke: #000;
    stroke-width: 2;
}

.canvas .solid {
    fill: #000;
}

.net-dot {
    fill: #18b400;
}

.bus-dot {
    fill: #067d06;
}

.bottom-tabs {
    flex: none;
    display: flex;
    padding: 4px 1px 0;
}

.bottom-tabs button {
    width: 88px;
    height: 25px;
    margin-right: -1px;
    padding: 0 7px 2px;
    text-align: left;
    white-space: nowrap;
    color: #666;
    border: 1px solid #999;
    border-bottom: none;
    border-radius: 4px 4px 0 0;
}

.statusbar {
    height: 22px;
    flex: none;
    display: flex;
    align-items: center;
    gap: 13px;
    padding: 0 3px;
    background: #eee;
}

/* Windows taskbar */
.taskbar {
    height: 40px;
    flex: none;
    display: flex;
    background: linear-gradient(90deg, #d9e1e3, #dfe6e8 30%, #d2d5df 45%, #d3d7e0);
    font-family: "Open Sans", "Noto Sans CJK SC", sans-serif;
}

.start {
    width: 48px;
    display: flex;
    align-items: center;
    justify-content: center;
}

.start svg {
    width: 17px;
    height: 17px;
}

.search {
    width: 344px;
    display: flex;
    align-items: center;
    gap: 10px;
    padding-left: 12px;
    background: #fff;
    border: 1px solid #c8c8c8;
}

.search svg {
    width: 17px;
    height: 17px;
    fill: none;
    stroke: #222;
    stroke-width: 1.5;
}

.search input {
    flex: 1;
    font-size: 14px;
}

.search input::placeholder {
    color: #222;
}

.apps {
    display: flex;
    margin-left: 1px;
}

.apps button {
    width: 49px;
    height: 40px;
    display: flex;
    align-items: center;
    justify-content: center;
    position: relative;
}

.apps svg {
    width: 24px;
    height: 24px;
}

.apps .on::after {
    content: "";
    position: absolute;
    left: 4px;
    right: 5px;
    bottom: 0;
    height: 2px;
    background: #0a78d4;
}

.apps .split::after {
    background: linear-gradient(90deg, #0a78d4 80%, #5aa8e8 80%);
}

.apps .active {
    background: #eef0f5;
}

.apps .active::after {
    left: 0;
    right: 0;
}

.tray {
    margin-left: auto;
    margin-right: 4px;
    display: flex;
    align-items: center;
    padding-right: 20px;
    border-right: 1px solid #a8acb4;
}

.sun {
    width: 18px;
    height: 18px;
    margin-right: 11px;
}

.weather {
    font-size: 14px;
    margin-right: 17px;
}

.tray-icon {
    width: 16px;
    height: 16px;
    margin-right: 8px;
    fill: none;
    stroke: #000;
}

.ime {
    font-size: 14px;
    margin-right: 14px;
}

.ime.boxed {
    font-size: 13px;
    line-height: 14px;
    background: #fff;
    border: 1px solid #444;
}

.clock {
    width: 64px;
    display: flex;
    flex-direction: column;
    align-items: center;
    line-height: 19px;
    margin-right: 16px;
}

.notice {
    width: 18px;
    height: 18px;
    fill: none;
    stroke: #000;
}
```
